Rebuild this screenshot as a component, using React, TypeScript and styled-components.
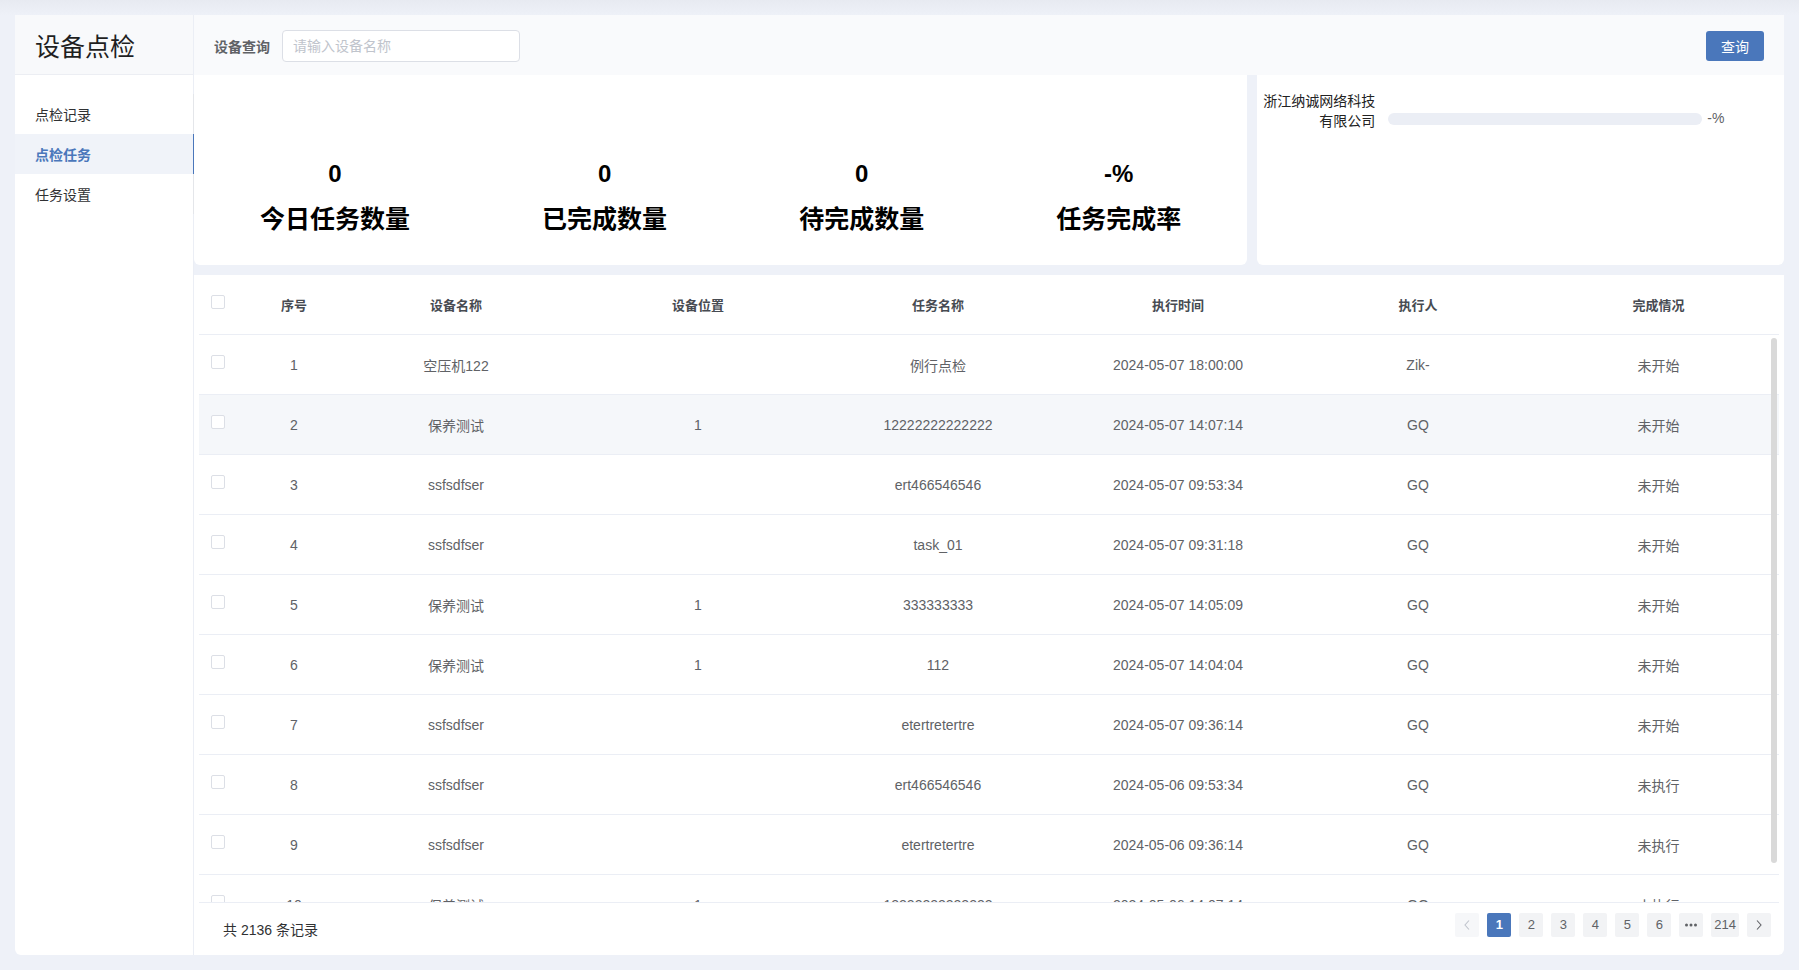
import React from "react";
import styled, { createGlobalStyle } from "styled-components";

const BLUE = "#4a77bb";
const LINE = "#ebeef5";

const GlobalStyle = createGlobalStyle`
  html, body {
    margin: 0;
    padding: 0;
    height: 100%;
  }
  body {
    background: linear-gradient(#e7eaf1 0, #eef1f8 15px) #eef1f8;
    font-family: "Liberation Sans", "Noto Sans CJK SC", sans-serif;
    font-size: 14px;
    color: #333;
  }
  #root {
    height: 100%;
  }
  * {
    box-sizing: border-box;
  }
`;

const Page = styled.div`
  height: 100vh;
  padding: 15px;
  display: flex;
`;

const Sidebar = styled.aside`
  width: 179px;
  flex-shrink: 0;
  background: #fff;
  border-right: 1px solid ${LINE};
  border-radius: 0 0 0 6px;
  display: flex;
  flex-direction: column;
`;

const Brand = styled.div`
  height: 60px;
  background: #f8f9fb;
  border-bottom: 1px solid #eceef3;
  display: flex;
  align-items: center;
  padding-left: 20px;
  font-size: 25px;
  color: #1f1f1f;
`;

const Menu = styled.ul`
  list-style: none;
  margin: 19px -1px 0 0;
  padding: 0;
  border-right: 1px solid #e4e6ea;
`;

const MenuItem = styled.li<{ $active?: boolean }>`
  height: 40px;
  display: flex;
  align-items: center;
  padding-left: 20px;
  margin-right: ${(p) => (p.$active ? "-1px" : "0")};
  font-size: 14px;
  color: ${(p) => (p.$active ? BLUE : "#303133")};
  font-weight: ${(p) => (p.$active ? 700 : 400)};
  background: ${(p) => (p.$active ? "#f0f3f9" : "transparent")};
  border-right: ${(p) => (p.$active ? `1px solid ${BLUE}` : "none")};
`;

const Main = styled.div`
  flex: 1;
  min-width: 0;
  display: flex;
  flex-direction: column;
`;

const Toolbar = styled.div`
  height: 60px;
  flex-shrink: 0;
  background: #f9fafc;
  display: flex;
  align-items: center;
  padding: 2px 20px 0;
`;

const FieldLabel = styled.span`
  font-size: 14px;
  font-weight: 700;
  color: #606266;
  margin-right: 12px;
`;

const SearchInput = styled.input`
  width: 238px;
  height: 32px;
  border: 1px solid #dcdfe6;
  border-radius: 4px;
  padding: 0 10px;
  font-family: inherit;
  font-size: 14px;
  color: #606266;
  outline: none;
  &::placeholder {
    color: #c0c4cc;
  }
`;

const PrimaryButton = styled.button`
  margin-left: auto;
  width: 58px;
  height: 30px;
  border: none;
  border-radius: 3px;
  background: ${BLUE};
  color: #fff;
  font-family: inherit;
  font-size: 14px;
`;

const StatsRow = styled.div`
  display: grid;
  grid-template-columns: 2fr 1fr;
  gap: 10px;
  height: 190px;
  flex-shrink: 0;
`;

const Card = styled.div`
  background: #fff;
  border-radius: 0 0 6px 6px;
`;

const StatsCard = styled(Card)`
  display: flex;
  justify-content: space-around;
  align-items: flex-start;
  padding-top: 85px;
`;

const Stat = styled.div`
  text-align: center;
  color: #000;
`;

const StatValue = styled.div`
  font-family: "Liberation Sans", "Noto Sans CJK SC", sans-serif;
  font-size: 24px;
  font-weight: 700;
  line-height: 28px;
`;

const StatLabel = styled.div`
  margin-top: 13px;
  font-size: 25px;
  font-weight: 700;
  line-height: 36px;
`;

const RateCard = styled(Card)`
  padding: 16px 0 0 3px;
`;

const CompanyRow = styled.div`
  display: flex;
  align-items: flex-end;
`;

const CompanyName = styled.div`
  width: 115px;
  text-align: right;
  font-size: 14px;
  line-height: 20px;
  color: #222;
`;

const Track = styled.div`
  width: 314px;
  height: 12px;
  border-radius: 6px;
  background: #ebeef5;
  margin: 0 0 6px 13px;
  overflow: hidden;
`;

const Fill = styled.div`
  height: 100%;
  background: ${BLUE};
  border-radius: 6px;
`;

const Percent = styled.span`
  margin: 0 0 3px 5px;
  font-size: 14px;
  line-height: 20px;
  color: #606266;
`;

const TableCard = styled.div`
  flex: 1;
  min-height: 0;
  margin-top: 10px;
  background: #fff;
  border-radius: 0 0 6px 0;
  padding: 0 5px;
  display: flex;
  flex-direction: column;
`;

const COLUMNS = "55px 80px 244px repeat(4, 240px) 1fr";

const HeadRow = styled.div`
  display: grid;
  grid-template-columns: ${COLUMNS};
  height: 60px;
  flex-shrink: 0;
  border-bottom: 1px solid ${LINE};
`;

const HeadCell = styled.div`
  display: flex;
  align-items: center;
  justify-content: center;
  font-size: 13px;
  font-weight: 700;
  color: #474b52;
`;

const BodyWrap = styled.div`
  flex: 1;
  min-height: 0;
  position: relative;
  display: flex;
`;

const Body = styled.div`
  flex: 1;
  overflow-y: auto;
  scrollbar-width: none;
  &::-webkit-scrollbar {
    display: none;
  }
`;

const ScrollThumb = styled.div`
  position: absolute;
  top: 3px;
  right: 2px;
  width: 6px;
  height: 525px;
  border-radius: 3px;
  background: #d9d9d9;
`;

const Row = styled.div<{ $hover?: boolean }>`
  display: grid;
  grid-template-columns: ${COLUMNS};
  height: 60px;
  border-bottom: 1px solid ${LINE};
  background: ${(p) => (p.$hover ? "#f5f7fa" : "#fff")};
`;

const Cell = styled.div`
  display: flex;
  align-items: center;
  justify-content: center;
  font-size: 14px;
  color: #606266;
  white-space: nowrap;
`;

const CheckCell = styled.div`
  display: flex;
  align-items: center;
  padding-left: 12px;
`;

const Checkbox = styled.span`
  width: 14px;
  height: 14px;
  border: 1px solid #dcdfe6;
  border-radius: 2px;
  background: #fff;
  margin-bottom: 5px;
`;

const Footer = styled.div`
  height: 53px;
  flex-shrink: 0;
  border-top: 1px solid ${LINE};
  display: flex;
  align-items: center;
  justify-content: space-between;
  padding: 0 8px 0 24px;
`;

const Total = styled.span`
  font-size: 14px;
  color: #303133;
`;

const Pager = styled.div`
  display: flex;
  gap: 8px;
  margin-bottom: 9px;
`;

const PageButton = styled.span<{ $active?: boolean; $disabled?: boolean }>`
  min-width: 24px;
  height: 24px;
  padding: 0 3px;
  border-radius: 2px;
  display: flex;
  align-items: center;
  justify-content: center;
  font-size: 13px;
  font-weight: ${(p) => (p.$active ? 700 : 400)};
  background: ${(p) => (p.$active ? BLUE : p.$disabled ? "#f6f7f9" : "#f2f3f5")};
  color: ${(p) => (p.$active ? "#fff" : p.$disabled ? "#c0c4cc" : "#606266")};
`;

const Chevron: React.FC<{ dir: "left" | "right" }> = ({ dir }) => (
  <svg width="10" height="12" viewBox="0 0 10 12">
    <polyline
      points={dir === "left" ? "7,1.5 3,6 7,10.5" : "3,1.5 7,6 3,10.5"}
      fill="none"
      stroke="currentColor"
      strokeWidth="1.1"
    />
  </svg>
);

const Dots = () => (
  <svg width="14" height="6" viewBox="0 0 14 6">
    <circle cx="2.5" cy="3" r="1.5" fill="currentColor" />
    <circle cx="7" cy="3" r="1.5" fill="currentColor" />
    <circle cx="11.5" cy="3" r="1.5" fill="currentColor" />
  </svg>
);

interface Task {
  device: string;
  place: string;
  task: string;
  time: string;
  user: string;
  status: string;
}

const tasks: Task[] = [
  { device: "空压机122", place: "", task: "例行点检", time: "2024-05-07 18:00:00", user: "Zik-", status: "未开始" },
  { device: "保养测试", place: "1", task: "12222222222222", time: "2024-05-07 14:07:14", user: "GQ", status: "未开始" },
  { device: "ssfsdfser", place: "", task: "ert466546546", time: "2024-05-07 09:53:34", user: "GQ", status: "未开始" },
  { device: "ssfsdfser", place: "", task: "task_01", time: "2024-05-07 09:31:18", user: "GQ", status: "未开始" },
  { device: "保养测试", place: "1", task: "333333333", time: "2024-05-07 14:05:09", user: "GQ", status: "未开始" },
  { device: "保养测试", place: "1", task: "112", time: "2024-05-07 14:04:04", user: "GQ", status: "未开始" },
  { device: "ssfsdfser", place: "", task: "etertretertre", time: "2024-05-07 09:36:14", user: "GQ", status: "未开始" },
  { device: "ssfsdfser", place: "", task: "ert466546546", time: "2024-05-06 09:53:34", user: "GQ", status: "未执行" },
  { device: "ssfsdfser", place: "", task: "etertretertre", time: "2024-05-06 09:36:14", user: "GQ", status: "未执行" },
  { device: "保养测试", place: "1", task: "12222222222222", time: "2024-05-06 14:07:14", user: "GQ", status: "未执行" },
];

const stats = [
  { value: "0", label: "今日任务数量" },
  { value: "0", label: "已完成数量" },
  { value: "0", label: "待完成数量" },
  { value: "-%", label: "任务完成率" },
];

const headers = ["序号", "设备名称", "设备位置", "任务名称", "执行时间", "执行人", "完成情况"];

export default function App() {
  return (
    <>
      <GlobalStyle />
      <Page>
        <Sidebar>
          <Brand>设备点检</Brand>
          <Menu>
            <MenuItem>点检记录</MenuItem>
            <MenuItem $active>点检任务</MenuItem>
            <MenuItem>任务设置</MenuItem>
          </Menu>
        </Sidebar>
        <Main>
          <Toolbar>
            <FieldLabel>设备查询</FieldLabel>
            <SearchInput placeholder="请输入设备名称" />
            <PrimaryButton>查询</PrimaryButton>
          </Toolbar>
          <StatsRow>
            <StatsCard>
              {stats.map((s) => (
                <Stat key={s.label}>
                  <StatValue>{s.value}</StatValue>
                  <StatLabel>{s.label}</StatLabel>
                </Stat>
              ))}
            </StatsCard>
            <RateCard>
              <CompanyRow>
                <CompanyName>浙江纳诚网络科技有限公司</CompanyName>
                <Track>
                  <Fill style={{ width: "0%" }} />
                </Track>
                <Percent>-%</Percent>
              </CompanyRow>
            </RateCard>
          </StatsRow>
          <TableCard>
            <HeadRow>
              <CheckCell>
                <Checkbox />
              </CheckCell>
              {headers.map((h) => (
                <HeadCell key={h}>{h}</HeadCell>
              ))}
            </HeadRow>
            <BodyWrap>
              <Body>
                {tasks.map((t, i) => (
                  <Row key={i} $hover={i === 1}>
                    <CheckCell>
                      <Checkbox />
                    </CheckCell>
                    <Cell>{i + 1}</Cell>
                    <Cell>{t.device}</Cell>
                    <Cell>{t.place}</Cell>
                    <Cell>{t.task}</Cell>
                    <Cell>{t.time}</Cell>
                    <Cell>{t.user}</Cell>
                    <Cell>{t.status}</Cell>
                  </Row>
                ))}
              </Body>
              <ScrollThumb />
            </BodyWrap>
            <Footer>
              <Total>共 2136 条记录</Total>
              <Pager>
                <PageButton $disabled>
                  <Chevron dir="left" />
                </PageButton>
                <PageButton $active>1</PageButton>
                {["2", "3", "4", "5", "6"].map((n) => (
                  <PageButton key={n}>{n}</PageButton>
                ))}
                <PageButton>
                  <Dots />
                </PageButton>
                <PageButton>214</PageButton>
                <PageButton>
                  <Chevron dir="right" />
                </PageButton>
              </Pager>
            </Footer>
          </TableCard>
        </Main>
      </Page>
    </>
  );
}
